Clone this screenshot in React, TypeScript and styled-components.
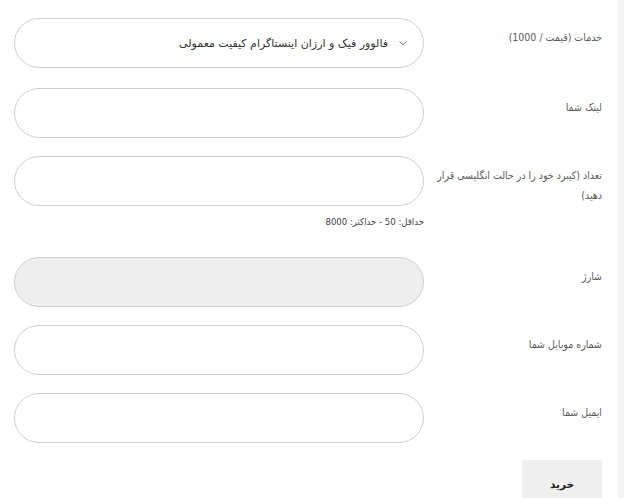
import styled, { createGlobalStyle } from 'styled-components';

const GlobalStyle = createGlobalStyle`
  * { box-sizing: border-box; }
  body {
    margin: 0;
    background: #f6f6f6;
    font-family: "DejaVu Sans", "Noto Sans", sans-serif;
  }
`;

const Page = styled.div`
  display: flex;
  min-height: 498px;
`;

const Card = styled.form`
  direction: rtl;
  width: 619px;
  min-height: 498px;
  background: #fff;
  border-right: 1px solid #ececec;
  padding: 18px 16px 0 14px;
  display: flex;
  flex-direction: column;
`;

const Row = styled.div<{ $gap?: number }>`
  display: flex;
  align-items: flex-start;
  margin-bottom: ${(p) => p.$gap ?? 18}px;
`;

const Label = styled.label`
  width: 178px;
  padding: 9px 0 0 2px;
  font-family: "DejaVu Sans Condensed", "DejaVu Sans", sans-serif;
  font-size: 10.5px;
  line-height: 20px;
  color: #5a5a5a;
`;

const Field = styled.div`
  width: 410px;
  display: flex;
  flex-direction: column;
`;

const Input = styled.input<{ $disabled?: boolean }>`
  width: 410px;
  height: 50px;
  border: 1px solid #cfcfcf;
  border-radius: 25px;
  background: ${(p) => (p.$disabled ? '#eeeeee' : '#fff')};
  padding: 0 20px;
  outline: none;
  font-family: inherit;
`;

const Select = styled.div`
  width: 410px;
  height: 50px;
  border: 1px solid #cfcfcf;
  border-radius: 25px;
  display: flex;
  align-items: center;
  gap: 10px;
  padding: 0 15px 0 20px;
  font-size: 11px;
  color: #333;
`;

const Chevron = styled.svg`
  width: 10px;
  height: 10px;
  flex: none;
`;

const Help = styled.div`
  margin-top: 9px;
  font-family: "DejaVu Sans Condensed", "DejaVu Sans", sans-serif;
  font-size: 9.5px;
  line-height: 14px;
  color: #444;
`;

const Button = styled.button`
  align-self: flex-start;
  width: 80px;
  height: 48px;
  border: none;
  background: #efefef;
  font-family: inherit;
  font-size: 10.5px;
  font-weight: 700;
  color: #222;
`;

export default function App() {
  return (
    <Page>
      <GlobalStyle />
      <Card>
        <Row $gap={20}>
          <Label>خدمات (قیمت / 1000)</Label>
          <Select>
            <Chevron viewBox="0 0 10 10">
              <path d="M1.5 3.5 L5 6.8 L8.5 3.5" fill="none" stroke="#777" strokeWidth="1" />
            </Chevron>
            <span>فالوور فیک و ارزان اینستاگرام کیفیت معمولی</span>
          </Select>
        </Row>
        <Row>
          <Label>لینک شما</Label>
          <Input />
        </Row>
        <Row $gap={28}>
          <Label>تعداد (کیبرد خود را در حالت انگلیسی قرار دهید)</Label>
          <Field>
            <Input />
            <Help>حداقل: 50 - حداکثر: 8000</Help>
          </Field>
        </Row>
        <Row>
          <Label>شارژ</Label>
          <Input $disabled readOnly />
        </Row>
        <Row>
          <Label>شماره موبایل شما</Label>
          <Input />
        </Row>
        <Row $gap={17}>
          <Label>ایمیل شما</Label>
          <Input />
        </Row>
        <Button type="button">خرید</Button>
      </Card>
    </Page>
  );
}
